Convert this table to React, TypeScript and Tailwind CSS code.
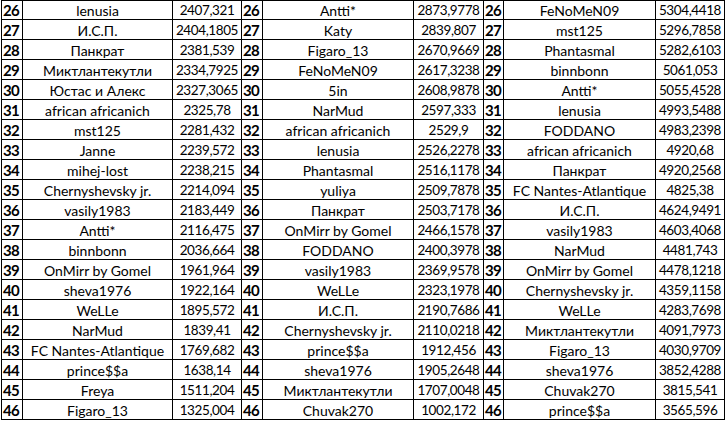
type Row = [string, string]

const groups: Row[][] = [
  [
    ['lenusia', '2407,321'],
    ['И.С.П.', '2404,1805'],
    ['Панкрат', '2381,539'],
    ['Миктлантекутли', '2334,7925'],
    ['Юстас и Алекс', '2327,3065'],
    ['african africanich', '2325,78'],
    ['mst125', '2281,432'],
    ['Janne', '2239,572'],
    ['mihej-lost', '2238,215'],
    ['Chernyshevsky jr.', '2214,094'],
    ['vasily1983', '2183,449'],
    ['Antti*', '2116,475'],
    ['binnbonn', '2036,664'],
    ['OnMirr by Gomel', '1961,964'],
    ['sheva1976', '1922,164'],
    ['WeLLe', '1895,572'],
    ['NarMud', '1839,41'],
    ['FC Nantes-Atlantique', '1769,682'],
    ['prince$$a', '1638,14'],
    ['Freya', '1511,204'],
    ['Figaro_13', '1325,004'],
  ],
  [
    ['Antti*', '2873,9778'],
    ['Katy', '2839,807'],
    ['Figaro_13', '2670,9669'],
    ['FeNoMeN09', '2617,3238'],
    ['5in', '2608,9878'],
    ['NarMud', '2597,333'],
    ['african africanich', '2529,9'],
    ['lenusia', '2526,2278'],
    ['Phantasmal', '2516,1178'],
    ['yuliya', '2509,7878'],
    ['Панкрат', '2503,7178'],
    ['OnMirr by Gomel', '2466,1578'],
    ['FODDANO', '2400,3978'],
    ['vasily1983', '2369,9578'],
    ['WeLLe', '2323,1978'],
    ['И.С.П.', '2190,7686'],
    ['Chernyshevsky jr.', '2110,0218'],
    ['prince$$a', '1912,456'],
    ['sheva1976', '1905,2648'],
    ['Миктлантекутли', '1707,0048'],
    ['Chuvak270', '1002,172'],
  ],
  [
    ['FeNoMeN09', '5304,4418'],
    ['mst125', '5296,7858'],
    ['Phantasmal', '5282,6103'],
    ['binnbonn', '5061,053'],
    ['Antti*', '5055,4528'],
    ['lenusia', '4993,5488'],
    ['FODDANO', '4983,2398'],
    ['african africanich', '4920,68'],
    ['Панкрат', '4920,2568'],
    ['FC Nantes-Atlantique', '4825,38'],
    ['И.С.П.', '4624,9491'],
    ['vasily1983', '4603,4068'],
    ['NarMud', '4481,743'],
    ['OnMirr by Gomel', '4478,1218'],
    ['Chernyshevsky jr.', '4359,1158'],
    ['WeLLe', '4283,7698'],
    ['Миктлантекутли', '4091,7973'],
    ['Figaro_13', '4030,9709'],
    ['sheva1976', '3852,4288'],
    ['Chuvak270', '3815,541'],
    ['prince$$a', '3565,596'],
  ],
]

const cell = 'flex items-center justify-center border-r border-b border-black whitespace-nowrap overflow-hidden pt-px'

export default function App() {
  return (
    <div className="h-[423px] w-[727px] overflow-hidden bg-white font-['Lato',sans-serif] text-black">
      <div className="ml-px grid w-[724px] grid-cols-[21px_150px_69px_21px_151px_70px_20px_152px_69px] border-t border-l border-black">
        {groups[0].map((_, i) => {
          const h = i === 0 ? 'h-[19px]' : 'h-[20px]'
          return groups.map((g, gi) => (
            <div key={`${i}-${gi}`} className="contents">
              <div className={`${cell} ${h} justify-start pl-px text-[15px] font-bold tracking-[-0.7px]`}>{26 + i}</div>
              <div className={`${cell} ${h} text-[14px]`}>{g[i][0]}</div>
              <div className={`${cell} ${h} text-[13.5px] tracking-[-0.4px]`}>{g[i][1]}</div>
            </div>
          ))
        })}
      </div>
    </div>
  )
}
